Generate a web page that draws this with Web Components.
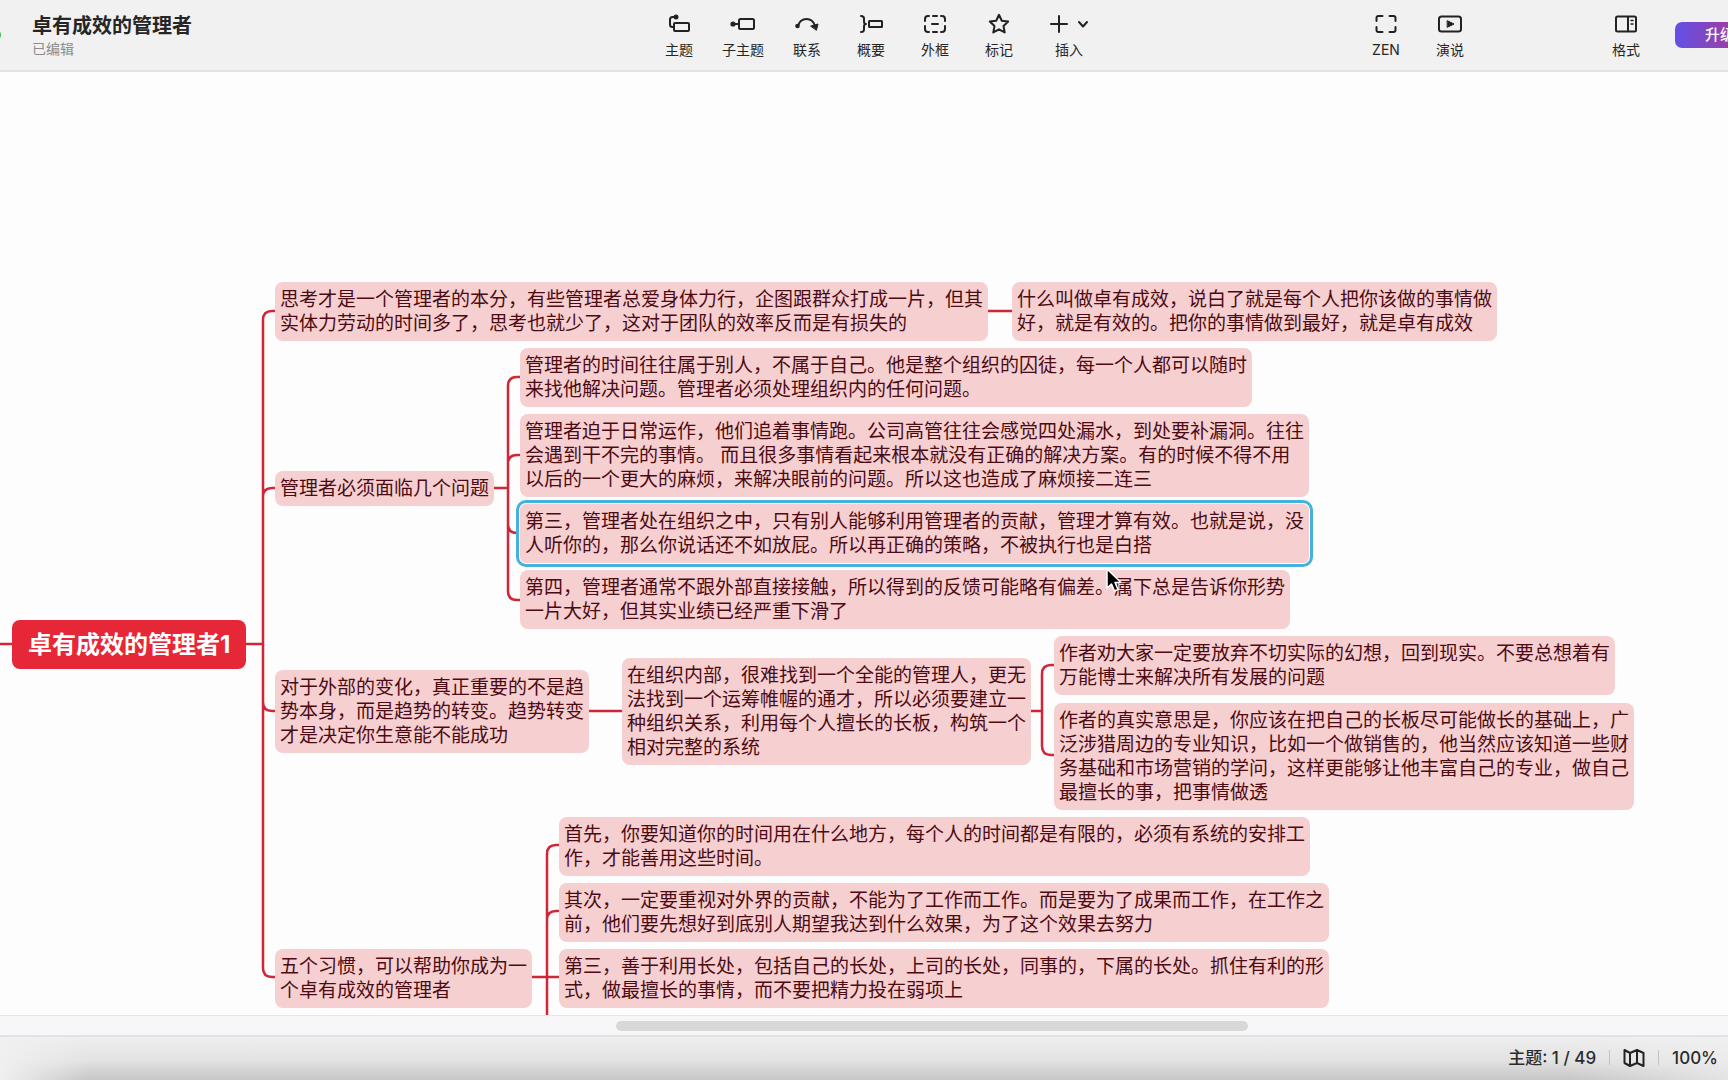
<!DOCTYPE html>
<html lang="zh-CN">
<head>
<meta charset="utf-8">
<title>卓有成效的管理者</title>
<style>
  html, body { margin: 0; height: 100%; }
  body { font-family: Inter, "Noto Sans CJK SC", sans-serif; color: #222; background: #fdfdfd; overflow: hidden; }
</style>
</head>
<body>
<mind-app></mind-app>

<script>
const define = (name, html, setup) => {
  const template = document.createElement('template');
  template.innerHTML = html;
  customElements.define(name, class extends HTMLElement {
    connectedCallback() {
      if (this.shadowRoot) return;
      const root = this.attachShadow({ mode: 'open' });
      root.append(template.content.cloneNode(true));
      if (setup) setup(this, root);
    }
  });
};

/* Toolbar button: icon on top, label below */
define('tool-button', `
<style>
  :host { display: block; width: var(--tool-width, 64px); }
  button { all: unset; box-sizing: border-box; width: 100%; display: flex; flex-direction: column; align-items: center; gap: 4px; font-size: 14px; line-height: 20px; color: #262626; white-space: nowrap; cursor: pointer; }
  .icon { display: flex; height: 24px; align-items: center; gap: 8px; }
  ::slotted(svg) { display: block; fill: none; stroke: #222; stroke-width: 2; stroke-linecap: round; stroke-linejoin: round; }
</style>
<button type="button"><span class="icon"><slot name="icon"></slot></span><slot></slot></button>`);

define('app-toolbar', `
<style>
  :host { display: block; }
  header { box-sizing: border-box; height: 72px; display: grid; grid-template-columns: 1fr auto 1fr; padding-left: 26px; background: #f1f1f1; border-bottom: 2px solid #e3e3e3; overflow: hidden; }
  .brand { display: flex; align-items: center; gap: 31px; margin-left: -37px; height: 70px; }
  .light { width: 12px; height: 12px; border-radius: 50%; background: #3fba4a; }
  .names { padding-top: 2px; }
  h1 { margin: 0; font-size: 20px; line-height: 26px; font-weight: 700; color: #262626; white-space: nowrap; }
  p { margin: 0; font-size: 14px; line-height: 20px; color: #8c8c8c; }
  .tools, .side { display: flex; padding-top: 12px; }
  .side { justify-content: flex-end; }
  .wide { --tool-width: 76px; }
  .format { margin-left: 112px; }
  .upgrade { flex: none; box-sizing: border-box; width: 100px; height: 26px; margin: 10px -47px 0 17px; padding: 0 30px; border: 0; border-radius: 7px; background: linear-gradient(90deg, #6250e8, #a03d9d 60px, #c23b80); color: #fff; font: 500 15px/26px Inter, "Noto Sans CJK SC", sans-serif; white-space: nowrap; text-align: left; }
  .solid { fill: #222; }
</style>
<header>
  <div class="brand"><span class="light"></span><div class="names"><h1>卓有成效的管理者</h1><p>已编辑</p></div></div>
  <nav class="tools" aria-label="编辑工具">
    <tool-button><svg slot="icon" width="24" height="20" viewBox="0 0 24 20"><path d="M9 3H5.500Q3 3 3 5.500V10.500Q3 13 5.500 13H7"/><circle class="solid" cx="9" cy="3" r="1.500"/><rect x="7" y="9" width="15" height="8" rx="1"/></svg>主题</tool-button>
    <tool-button><svg slot="icon" width="26" height="20" viewBox="0 0 26 20"><circle class="solid" cx="3" cy="10" r="1.600"/><path d="M3 10H9"/><rect x="9" y="5" width="15" height="10" rx="1.500"/></svg>子主题</tool-button>
    <tool-button><svg slot="icon" width="26" height="20" viewBox="0 0 26 20"><path d="M4 12Q6 5 12.500 5T21 12"/><circle class="solid" cx="3.500" cy="12" r="1.300"/><path class="solid" stroke-width="1" d="M17 12L24 10L22.500 16Z"/></svg>联系</tool-button>
    <tool-button><svg slot="icon" width="26" height="20" viewBox="0 0 26 20"><path d="M3 2Q6 2 6 4.500V7.500Q6 10 8 10Q6 10 6 12.500V15.500Q6 18 3 18"/><rect x="11" y="7" width="13" height="6" rx="0.500"/></svg>概要</tool-button>
    <tool-button><svg slot="icon" width="24" height="20" viewBox="0 0 24 20"><path d="M2 7V5Q2 2 5 2H6M10 2H14M18 2H19Q22 2 22 5V7M22 12V15Q22 18 19 18H18M14 18H10M6 18H5Q2 18 2 15V12M9 10H15"/></svg>外框</tool-button>
    <tool-button><svg slot="icon" width="22" height="22" viewBox="0 0 22 22"><path d="M11 1.800L13.800 7.700L20.200 8.500L15.500 13L16.700 19.400L11 16.300L5.300 19.400L6.500 13L1.800 8.500L8.200 7.700Z"/></svg>标记</tool-button>
    <tool-button class="wide"><svg slot="icon" width="20" height="20" viewBox="0 0 20 20"><path d="M10 2V18M2 10H18"/></svg><svg slot="icon" width="12" height="8" viewBox="0 0 12 8"><path d="M2 2L6 6.500L10 2"/></svg>插入</tool-button>
  </nav>
  <div class="side">
    <tool-button><svg slot="icon" width="22" height="20" viewBox="0 0 22 20"><path d="M1.500 7V4Q1.500 2 3.500 2H7.500M14.500 2H18.500Q20.500 2 20.500 4V7M20.500 13V16Q20.500 18 18.500 18H14.500M7.500 18H3.500Q1.500 18 1.500 16V13"/></svg>ZEN</tool-button>
    <tool-button><svg slot="icon" width="26" height="20" viewBox="0 0 26 20"><rect x="2" y="2.500" width="22" height="15" rx="2.500"/><path class="solid" stroke-width="1" d="M10.500 6.800L17 10L10.500 13.200Z"/></svg>演说</tool-button>
    <tool-button class="format"><svg slot="icon" width="24" height="20" viewBox="0 0 24 20"><rect x="2" y="2.500" width="20" height="15" rx="1.500"/><path d="M14 3V17"/><path stroke-width="1.500" d="M17 6.500H19M17 10H19"/></svg>格式</tool-button>
    <button class="upgrade" type="button">升级</button>
  </div>
</header>`);

/* One topic on the free canvas; x and y are canvas coordinates */
define('mind-topic', `
<style>
  :host { display: block; position: absolute; box-sizing: border-box; padding: 6px 5px 5px; border-radius: 8px; background: #f6cfd0; color: #4c0b13; font-size: 19px; line-height: 24px; white-space: nowrap; }
  :host([selected]) { outline: 3px solid #43b2dd; outline-offset: 1px; box-shadow: 0 0 0 2px #fdfdfd; border-radius: 6px; }
  :host([central]) { padding: 8px 16px; border-radius: 8px; background: #e62737; color: #fff; font-size: 24px; line-height: 33px; font-weight: 700; }
</style>
<slot></slot>`, host => {
  host.style.left = host.getAttribute('x') + 'px';
  host.style.top = host.getAttribute('y') + 'px';
});

define('mind-canvas', `
<style>
  :host { display: block; position: relative; overflow: hidden; background: #fdfdfd; }
  .links { position: absolute; left: 0; top: 0; width: 100%; height: 100%; fill: none; stroke: #cf2737; stroke-width: 2.500; overflow: hidden; }
  .pointer { position: absolute; left: 1105px; top: 495px; }
</style>
<svg class="links" aria-hidden="true">
  <path d="M0 572H263M275 239H272Q263 239 263 248V896Q263 905 272 905H275M275 416H272Q263 416 263 425M275 639H272Q263 639 263 630"/>
  <path d="M980 239H1014M490 416H508M522 305H517Q508 305 508 314V519Q508 528 517 528H522M522 383H517Q508 383 508 392M520 461H517Q508 461 508 452"/>
  <path d="M585 639H624M1020 639H1042M1056 593H1051Q1042 593 1042 602V674Q1042 683 1051 683H1056"/>
  <path d="M525 905H561M561 773H556Q547 773 547 782V1400M561 839H556Q547 839 547 848"/>
</svg>
<mind-topic central x="12" y="548">卓有成效的管理者1</mind-topic>
<mind-topic x="275" y="210">思考才是一个管理者的本分，有些管理者总爱身体力行，企图跟群众打成一片，但其<br>实体力劳动的时间多了，思考也就少了，这对于团队的效率反而是有损失的</mind-topic>
<mind-topic x="1012" y="210">什么叫做卓有成效，说白了就是每个人把你该做的事情做<br>好，就是有效的。把你的事情做到最好，就是卓有成效</mind-topic>
<mind-topic x="275" y="399">管理者必须面临几个问题</mind-topic>
<mind-topic x="520" y="276">管理者的时间往往属于别人，不属于自己。他是整个组织的囚徒，每一个人都可以随时<br>来找他解决问题。管理者必须处理组织内的任何问题。</mind-topic>
<mind-topic x="520" y="342">管理者迫于日常运作，他们追着事情跑。公司高管往往会感觉四处漏水，到处要补漏洞。往往<br>会遇到干不完的事情。 而且很多事情看起来根本就没有正确的解决方案。有的时候不得不用<br>以后的一个更大的麻烦，来解决眼前的问题。所以这也造成了麻烦接二连三</mind-topic>
<mind-topic selected x="520" y="432">第三，管理者处在组织之中，只有别人能够利用管理者的贡献，管理才算有效。也就是说，没<br>人听你的，那么你说话还不如放屁。所以再正确的策略，不被执行也是白搭</mind-topic>
<mind-topic x="520" y="498">第四，管理者通常不跟外部直接接触，所以得到的反馈可能略有偏差。属下总是告诉你形势<br>一片大好，但其实业绩已经严重下滑了</mind-topic>
<mind-topic x="275" y="598">对于外部的变化，真正重要的不是趋<br>势本身，而是趋势的转变。趋势转变<br>才是决定你生意能不能成功</mind-topic>
<mind-topic x="622" y="586">在组织内部，很难找到一个全能的管理人，更无<br>法找到一个运筹帷幄的通才，所以必须要建立一<br>种组织关系，利用每个人擅长的长板，构筑一个<br>相对完整的系统</mind-topic>
<mind-topic x="1054" y="564">作者劝大家一定要放弃不切实际的幻想，回到现实。不要总想着有<br>万能博士来解决所有发展的问题</mind-topic>
<mind-topic x="1054" y="631">作者的真实意思是，你应该在把自己的长板尽可能做长的基础上，广<br>泛涉猎周边的专业知识，比如一个做销售的，他当然应该知道一些财<br>务基础和市场营销的学问，这样更能够让他丰富自己的专业，做自己<br>最擅长的事，把事情做透</mind-topic>
<mind-topic x="275" y="877">五个习惯，可以帮助你成为一<br>个卓有成效的管理者</mind-topic>
<mind-topic x="559" y="745">首先，你要知道你的时间用在什么地方，每个人的时间都是有限的，必须有系统的安排工<br>作，才能善用这些时间。</mind-topic>
<mind-topic x="559" y="811">其次，一定要重视对外界的贡献，不能为了工作而工作。而是要为了成果而工作，在工作之<br>前，他们要先想好到底别人期望我达到什么效果，为了这个效果去努力</mind-topic>
<mind-topic x="559" y="877">第三，善于利用长处，包括自己的长处，上司的长处，同事的，下属的长处。抓住有利的形<br>式，做最擅长的事情，而不要把精力投在弱项上</mind-topic>
<svg class="pointer" width="18" height="28" viewBox="0 0 18 28" aria-hidden="true"><path d="M2 2V21L6.500 17L9.500 24L13 22.500L10 15.500H16Z" fill="#000" stroke="#fff" stroke-width="1.500" stroke-linejoin="round"/></svg>`);

define('scroll-strip', `
<style>
  :host { display: grid; grid-template-columns: 616fr 632fr 480fr; align-items: center; box-sizing: border-box; height: 20px; border-top: 1px solid #e6e6e8; background: #f7f7f9; }
  i { grid-column: 2; height: 10px; border-radius: 5px; background: #d8d8d8; }
</style>
<i></i>`);

define('status-bar', `
<style>
  footer { box-sizing: border-box; height: 45px; display: flex; align-items: center; justify-content: flex-end; gap: 13px; padding: 0 10px 2px 0; border-top: 2px solid #e2e2e2;
    background: linear-gradient(90deg, #f0f0f0, #f0f0f000 90px calc(100% - 160px), #f0f0f0b0), linear-gradient(#eeeeee, #e2e2e2 55%, #c6c6c6);
    font-size: 17px; line-height: 24px; font-weight: 500; color: #2b2b2b; white-space: nowrap; }
  i { width: 1px; height: 15px; background: #c2c2c2; }
  button { all: unset; display: flex; cursor: pointer; }
  svg { fill: none; stroke: #222; stroke-width: 2; stroke-linejoin: round; }
</style>
<footer><span>主题: 1 / 49</span><i></i><button type="button" aria-label="导航图"><svg width="22" height="20" viewBox="0 0 22 20"><path d="M1.500 2L7 5L14 2L20.500 5V18L14 15L7 18L1.500 15ZM7 5V18M14 2V15"/></svg></button><i></i><button type="button">100%</button></footer>`);

define('mind-app', `
<style>
  :host { display: flex; flex-direction: column; height: 100vh; }
  mind-canvas { flex: 1; min-height: 0; }
</style>
<app-toolbar></app-toolbar>
<mind-canvas></mind-canvas>
<scroll-strip></scroll-strip>
<status-bar></status-bar>`);
</script>
</body>
</html>
